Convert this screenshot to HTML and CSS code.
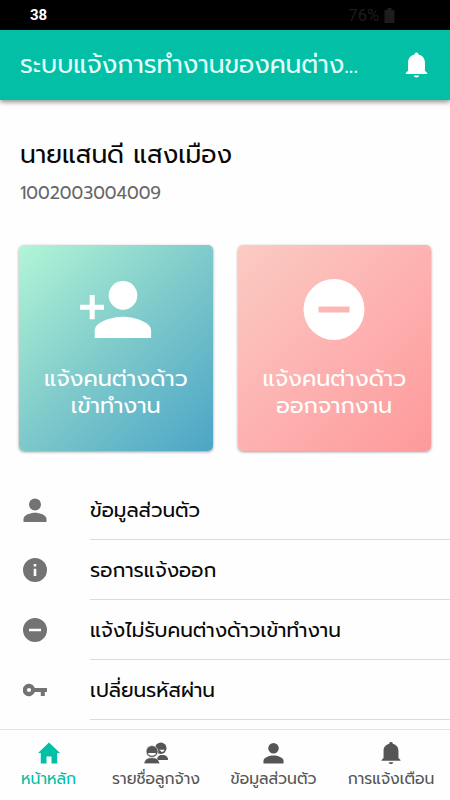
FILE: index.html
```html
<!DOCTYPE html>
<html lang="th">
<head>
<meta charset="utf-8">
<meta name="viewport" content="width=device-width, initial-scale=1">
<title>ระบบแจ้งการทำงานของคนต่างด้าว</title>
<link rel="stylesheet" href="styles.css">
</head>
<body>
<svg class="defs" aria-hidden="true">
  <symbol id="bell" viewBox="0 0 24 26"><path d="M12 26c1.500 0 2.700-.9 2.700-2.100H9.300c0 1.200 1.200 2.100 2.700 2.100zM20.800 19V10.300c0-4-2.600-7.300-6.700-8.200V1.700a2.100 1.700 0 0 0-4.200 0v.4C5.800 3 3.200 6.300 3.200 10.300V19L.8 21.300v1h22.400v-1z"/></symbol>
  <symbol id="person" viewBox="0 0 24 24"><circle cx="12" cy="6.500" r="6"/><path d="M.5 24v-3c0-4 7-6.200 11.500-6.200S23.500 17 23.500 21v3z"/></symbol>
</svg>
<div class="screen">
  <div class="status">
    <span class="clock">38</span>
    <span class="battery">76%</span>
    <svg class="cell" viewBox="0 0 10 15"><path d="M3 0h4v2h3v13H0V2h3z"/></svg>
  </div>
  <header class="appbar">
    <h1>ระบบแจ้งการทำงานของคนต่าง...</h1>
    <svg class="appbar-bell"><use href="#bell"/></svg>
  </header>
  <main>
    <section class="profile">
      <h2>นายแสนดี แสงเมือง</h2>
      <p>1002003004009</p>
    </section>
    <section class="cards">
      <a class="card card-in">
        <svg class="card-icon" viewBox="0 0 72 62"><path d="M0 26.700h9.700v-9.700h5v9.700h9.300v5h-9.300v9.500h-5v-9.500H0z"/><circle cx="43" cy="17.400" r="14.300"/><path d="M14.700 60v-7.500c0-8.500 17-13.800 28.200-13.800s28.200 5.300 28.200 13.800V60z"/></svg>
        <span class="line">แจ้งคนต่างด้าว<br>เข้าทำงาน</span>
      </a>
      <a class="card card-out">
        <svg class="card-icon" viewBox="0 0 62 62"><path fill-rule="evenodd" d="M31 1a30.500 30.500 0 1 0 0 61a30.500 30.500 0 0 0 0-61zM15.500 28.500h31v6h-31z"/></svg>
        <span class="line">แจ้งคนต่างด้าว<br>ออกจากงาน</span>
      </a>
    </section>
    <ul class="menu">
      <li><svg class="menu-icon"><use href="#person"/></svg><div class="row">ข้อมูลส่วนตัว</div></li>
      <li><svg class="menu-icon" viewBox="0 0 24 24"><path fill-rule="evenodd" d="M12 0a12 12 0 1 0 0 24a12 12 0 0 0 0-24zM10.700 6h2.600v2.500h-2.600zM10.700 10.700h2.600V18h-2.600z"/></svg><div class="row">รอการแจ้งออก</div></li>
      <li><svg class="menu-icon" viewBox="0 0 24 24"><path fill-rule="evenodd" d="M12 0a12 12 0 1 0 0 24a12 12 0 0 0 0-24zM6 10.800h12v2.400H6z"/></svg><div class="row">แจ้งไม่รับคนต่างด้าวเข้าทำงาน</div></li>
      <li><svg class="menu-icon" viewBox="0 0 24 24"><path fill-rule="evenodd" d="M11.800 10a6.200 6.200 0 1 0 0 4h6v4h4v-4H24v-4zM6 9.900a2.100 2.100 0 1 0 0 4.200a2.100 2.100 0 0 0 0-4.200z"/></svg><div class="row">เปลี่ยนรหัสผ่าน</div></li>
    </ul>
  </main>
  <nav class="tabs">
    <a class="tab active"><svg class="tab-icon home" viewBox="0 0 22 21"><path d="M11 0 0 10.500h2.800V21h5.700v-7h5v7h5.700V10.500H22z"/></svg><span>หน้าหลัก</span></a>
    <a class="tab"><svg class="tab-icon" viewBox="0 0 24 21"><circle cx="16.800" cy="5.800" r="5.700"/><path d="M13 17.500c0-3.500 2-5 5-5 4 0 6 1.500 6 5z"/><g class="front"><circle cx="8" cy="9" r="5.900"/><path d="M0 21.200c.5-4.200 3-6 7.800-6s7.300 1.800 7.800 6z"/></g><path class="face" d="M4 10.500h8c-.3 1.800-1.800 2.700-4 2.700s-3.700-.9-4-2.700zM14.800 7.200h5.700c-.4 1.400-1.500 2.200-3.200 2.300-.3-1-.9-1.700-2.500-2.300z"/></svg><span>รายชื่อลูกจ้าง</span></a>
    <a class="tab"><svg class="tab-icon user"><use href="#person"/></svg><span>ข้อมูลส่วนตัว</span></a>
    <a class="tab"><svg class="tab-icon"><use href="#bell"/></svg><span>การแจ้งเตือน</span></a>
  </nav>
</div>
</body>
</html>
```
FILE: styles.css
```css
* { box-sizing: border-box; }
body { margin: 0; background: #fefefe; color: #080808; font-family: "Prompt", "Kanit", "Noto Sans Thai", "Noto Sans", sans-serif; }
h1, h2, p, ul { margin: 0; padding: 0; font-weight: 400; }
h1, h2 { white-space: nowrap; }
svg { fill: currentColor; flex: none; }
span { white-space: nowrap; }
.defs { display: none; }
.screen { height: 800px; display: flex; flex-direction: column; overflow: hidden; }
.status { height: 30px; flex: none; background: #000; display: flex; align-items: center; padding: 0 55px 0 30px; font-family: Roboto, sans-serif; }
.clock { color: #fff; font-size: 15px; font-weight: 700; flex: 1; }
.battery { color: #1d1d1d; font-size: 16.5px; margin-right: 5px; }
.cell { color: #1d1d1d; width: 11px; height: 15px; }
.appbar { height: 70px; flex: none; background: #02bfa5; color: #e4fffb; display: flex; align-items: center; justify-content: space-between; padding: 0 22px 0 20px; box-shadow: 0 2px 5px rgba(0,0,0,.45); }
.appbar h1 { font-size: 25px; line-height: 36px; }
.appbar-bell { width: 23px; height: 26px; color: #fff; }
main { flex: 1; min-height: 0; }
.profile { height: 145px; padding: 37px 20px 0; }
.profile h2 { font-size: 25px; line-height: 36px; }
.profile p { font-size: 17.4px; line-height: 24px; margin-top: 8px; color: #666; }
.cards { display: flex; gap: 25px; padding: 0 19px; }
.card { flex: 1; height: 206px; border-radius: 5px; color: #fff; display: flex; flex-direction: column; align-items: center; padding-top: 33px; box-shadow: 0 1px 3px rgba(0,0,0,.4); }
.card-in { background: linear-gradient(135deg, #b2f5d6 0%, #80cbcb 48%, #4ca5c6 100%); }
.card-out { background: linear-gradient(135deg, #fbcbc2 0%, #fdb1b0 52%, #fe999b 100%); }
.card-icon { height: 62px; width: 72px; margin-bottom: 25px; }
.line { font-size: 22.4px; line-height: 27px; text-align: center; }
.menu { list-style: none; padding-top: 29px; }
.menu li { height: 60px; display: flex; align-items: center; padding-left: 23px; }
.menu-icon { width: 24px; height: 24px; color: #737373; margin-right: 43px; }
.row { flex: 1; height: 60px; border-bottom: 1px solid #dcdcdc; display: flex; align-items: center; font-size: 20px; white-space: nowrap; }
.tabs { height: 71px; flex: none; border-top: 1px solid #e2e2e2; background: #fefefe; display: grid; grid-template-columns: 97px 118px 117px 118px; padding-top: 12px; font-size: 15.6px; color: #555; }
.tab { display: flex; flex-direction: column; align-items: center; line-height: 24px; gap: 3px; }
.active { color: #02bfa5; }
.tab-icon { width: 24px; height: 22px; }
.home { width: 22px; }
.user { width: 21px; }
.front { stroke: #fefefe; stroke-width: .6; }
.face { fill: #fefefe; }
```
